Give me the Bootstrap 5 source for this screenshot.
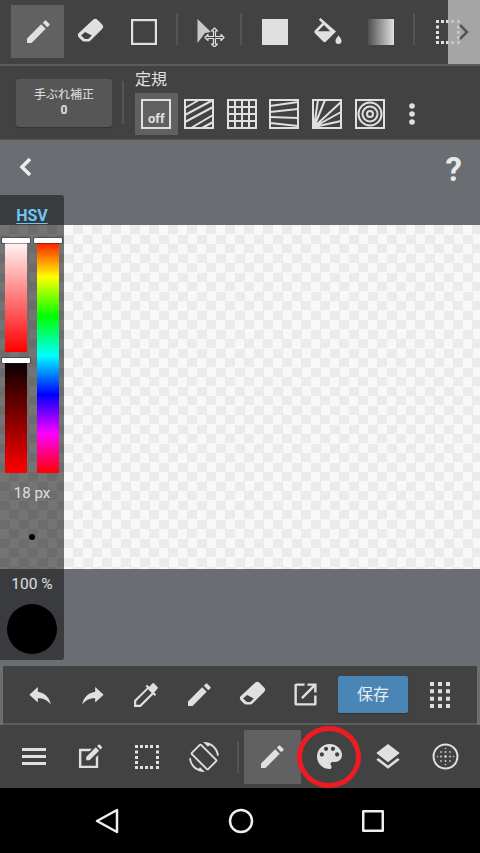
<!DOCTYPE html>
<html lang="ja">
<head>
    <meta charset="UTF-8">
    <meta name="viewport" content="width=device-width, initial-scale=1.0">
    <title>ペイント</title>
    <link href="https://cdn.jsdelivr.net/npm/bootstrap@5.3.0/dist/css/bootstrap.min.css" rel="stylesheet">
    <style>
        html, body { width: 480px; height: 853px; overflow: hidden; background: #000; }
        body { font-family: Roboto, "Noto Sans CJK JP", sans-serif; color: #e0e0e0; }
        svg { display: block; }
        .ico { fill: #e0e0e0; stroke: none; }
        .app-shell { width: 480px; height: 853px; }

        .bar-top { height: 66px; background: #424242; border-bottom: 2px solid #5c5c5c; padding: 5px 0 0 11px; }
        .tool-slot { width: 53px; height: 53px; flex: none; }
        .tool-slot.is-on, .main-slot.is-on { background: #616161; }
        .tool-sep { width: 2px; height: 32px; background: #555; flex: none; margin: 0 6px; }
        .tool-sep-tight { margin-left: 3px; }
        .scroll-hint { top: 0; right: 0; width: 32px; height: 64px; background: rgba(190,190,190,.8); }

        .bar-rules { height: 74px; background: #424242; border-bottom: 1px solid #555; padding-left: 16px; }
        .shake-btn { width: 96px; height: 48px; margin-top: 13px; background: #565656; border-radius: 3px; font-size: 12px; line-height: 15px; box-shadow: 0 1px 1px #333; }
        .shake-btn b { font-family: Roboto, sans-serif; }
        .rules-sep { width: 2px; height: 43px; background: #555; margin: 15px 11px 0 10px; }
        .rules-title { font-size: 16px; line-height: 20px; padding-top: 4px; height: 27px; }
        .rule-slot { width: 42.7px; height: 42px; flex: none; }
        .rule-slot.is-on { background: #616161; }
        .off-box { width: 30px; height: 30px; border: 2px solid #e0e0e0; font-size: 13px; font-weight: 700; line-height: 14px; padding-bottom: 1px; }

        .stage { height: 526px; background: #6a6d72; }
        .stage-head { height: 85px; padding: 17px 18px 0 18px; }
        .help-mark { font-size: 33px; color: #e8e8e8; margin-top: -4px; }
        .sheet { height: 344px; margin-left: 64px; background: #f8f8f8; background-image: conic-gradient(#ebebeb 25%, transparent 0 50%, #ebebeb 0 75%, transparent 0); background-size: 19px 19px; }

        .side-panel { left: 0; top: 55px; width: 64px; height: 465px; }
        .side-head { height: 30px; background: #3a3b3e; border-top-right-radius: 3px; color: #6ec6f5; font-size: 16px; font-weight: 700; line-height: 18px; padding-top: 12px; text-decoration: underline; text-underline-offset: 2px; }
        .side-body { height: 344px; background: #747474; background-image: conic-gradient(#6c6c6c 25%, transparent 0 50%, #6c6c6c 0 75%, transparent 0); background-size: 19px 19px; padding: 13px 5px 0; }
        .side-foot { height: 91px; background: #3a3b3e; border-bottom-right-radius: 3px; font-size: 15.500px; line-height: 16px; padding-top: 7px; }
        .slider-col { width: 22px; gap: 6px; }
        .slider { width: 22px; }
        .slider i { position: absolute; left: -3px; top: 0; width: 28px; height: 5px; background: #fff; border-radius: 1px; box-shadow: 0 0 0 1px rgba(40,40,40,.45); }
        .sl-sat { height: 114px; background: linear-gradient(#fff, #f00); }
        .sl-val { height: 115px; background: linear-gradient(#000, #f00); }
        .sl-hue { height: 235px; background: linear-gradient(#f00, #ff0 16.6%, #0f0 33.3%, #0ff 50%, #00f 66.6%, #f0f 83.3%, #f00); }
        .px-label { font-size: 15px; line-height: 16px; margin-top: 12px; }
        .brush-dot { width: 6px; height: 6px; background: #000; border-radius: 50%; margin-top: 33px; }
        .ink-dot { width: 50px; height: 50px; background: #000; border-radius: 50%; margin-top: 12px; }

        .bar-edit { height: 59px; background: #6a6d72; padding: 0 3px; }
        .bar-edit-in { height: 59px; background: #424242; border-bottom: 2px solid #5c5c5c; padding: 0 9px 0 10px; }
        .edit-slot { width: 53.2px; flex: none; }
        .save-btn { width: 70px; height: 37px; margin-left: 6px; margin-right: 5px; background: #4a86b5; border: 0; border-radius: 2px; color: #e8eef3; font-size: 16px; padding: 0; box-shadow: 0 1px 1px #333; }

        .bar-main { height: 63px; background: #424242; padding-left: 5.650px; }
        .main-slot { width: 56.700px; height: 54px; flex: none; }
        .main-slot.is-on { width: 57px; }
        .main-slot.main-wide { width: 58px; }
        .main-sep { width: 2px; height: 32px; background: #555; flex: none; margin: 0 4.500px 0 5px; }
        .red-ring { left: 297px; top: 726px; width: 64px; height: 62px; border: 5px solid #ed1c24; border-radius: 50%; }

        .bar-nav { height: 65px; background: #000; padding-left: 95px; gap: 108.500px; }
    </style>
</head>
<body>
    <svg width="0" height="0" class="position-absolute">
        <defs>
            <symbol id="i-pen" viewBox="0 0 24 24"><path d="M1 18.500 15.200 4.300l4.500 4.500L5.500 23H1z"/><path d="M16.800 2.700l2-2a1 1 0 0 1 1.400 0l3.100 3.100a1 1 0 0 1 0 1.400l-2 2z"/></symbol>
            <symbol id="i-eraser" viewBox="0 0 26 26"><path d="M15.500 1.800a3 3 0 0 1 4.200 0l4.500 4.500a3 3 0 0 1 0 4.200L13 21.700a3 3 0 0 1-2 .9H6.800a3 3 0 0 1-2-.9l-3-3a3 3 0 0 1 0-4.200zM7.800 13.400l-3.900 3.400 3.700 3.500h3.300l3.400-3.400z" fill-rule="evenodd"/></symbol>
            <symbol id="i-move" viewBox="0 0 30 30"><path d="M1.500 2 15 15l-6 1-7.500 10z" fill="#c8c8c8"/><path d="M18.500 11l3 3h-2v5.500h5.500v-2l3 3-3 3v-2h-5.500v5.500h2l-3 3-3-3h2v-5.500h-5.500v2l-3-3 3-3v2h5.500v-5.500h-2z" fill="#424242" stroke="#e0e0e0" stroke-width="1.200" stroke-linejoin="round"/></symbol>
            <symbol id="i-bucket" viewBox="0 0 30 30"><path d="M7.500 1 5.800 2.700l3.400 3.400-7.300 7.300a2 2 0 0 0 0 2.800l8.300 8.300a2 2 0 0 0 2.800 0l10-10zM11 8l6.200 6.200H4.800z" fill-rule="evenodd"/><path d="M25.500 18.500s-3 3.300-3 5.400a3 3 0 0 0 6 0c0-2.100-3-5.400-3-5.400z"/></symbol>
            <symbol id="i-dash" viewBox="0 0 26 26"><path d="M1 1h3v3H1zM6 1h3v3H6zM11 1h3v3h-3zM16 1h3v3h-3zM22 1h3v3h-3zM1 6.500h3v3H1zM22 6.500h3v3h-3zM1 12h3v3H1zM22 12h3v3h-3zM1 17h3v3H1zM22 17h3v3h-3zM1 22h3v3H1zM6 22h3v3H6zM11 22h3v3h-3zM16 22h3v3h-3zM22 22h3v3h-3z"/></symbol>
            <symbol id="i-back" viewBox="0 0 24 24"><path d="M10 9V4.500L2.200 11.800 10 19v-4.100c5 0 8.800 1.600 12 6-1-5.500-4.500-10.800-12-11.900z"/></symbol>
            <symbol id="i-dropper" viewBox="0 0 24 24"><path d="M22.700 4.600 19.400 1.300c-.4-.4-1-.4-1.400 0l-3.100 3.100-1.900-1.900-1.400 1.400 1.400 1.400L1 16.800V23h6.200l11.500-11.500 1.400 1.400 1.400-1.400-1.900-1.900L22.700 6c.4-.4.400-1 0-1.400zM6.300 21H3v-3.300L13.900 6.800l3.300 3.300z"/></symbol>
            <symbol id="i-export" viewBox="0 0 26 26"><path d="M3.500 1.500H12v2.500H4v18h18v-8h2.500v8.500a2 2 0 0 1-2 2h-19a2 2 0 0 1-2-2v-19a2 2 0 0 1 2-2z"/><path d="M15 1.500h9.500V11H22V5.800L10.200 17.600l-1.800-1.800L20.200 4H15z"/></symbol>
            <symbol id="i-grid" viewBox="0 0 20 26"><path d="M0 0h4v4H0zM8 0h4v4H8zM16 0h4v4h-4zM0 7.300h4v4H0zM8 7.300h4v4H8zM16 7.300h4v4h-4zM0 14.700h4v4H0zM8 14.700h4v4H8zM16 14.700h4v4h-4zM0 22h4v4H0zM8 22h4v4H8zM16 22h4v4h-4z"/></symbol>
            <symbol id="i-note" viewBox="0 0 26 26"><path d="M1 5h13.500l-2.500 2.500H3.500v15h15v-8.500l2.500-2.500V25H1z"/><path d="M8.500 13.500 18.500 3.500l3.500 3.500-10 10H8.500z"/><path d="M19.800 2.200l1.500-1.500a1 1 0 0 1 1.400 0l2.100 2.100a1 1 0 0 1 0 1.400l-1.500 1.500z"/></symbol>
            <symbol id="i-rotate" viewBox="0 0 24 24"><path d="M16.480 2.520c3.270 1.550 5.610 4.720 5.970 8.480h1.500C23.440 4.840 18.290 0 12 0l-.66.030 3.810 3.810 1.330-1.320zm-6.250-.77c-.59-.59-1.540-.59-2.120 0L1.750 8.110c-.59.59-.59 1.540 0 2.120l12.020 12.020c.59.59 1.540.59 2.120 0l6.360-6.360c.59-.59.59-1.540 0-2.120L10.230 1.750zm4.600 19.440L2.810 9.170l6.360-6.360 12.020 12.020-6.360 6.360zm-7.310.29C4.250 19.940 1.910 16.760 1.550 13H.05C.56 19.160 5.710 24 12 24l.66-.03-3.810-3.810-1.330 1.320z"/></symbol>
            <symbol id="i-palette" viewBox="3 3 18 18"><path d="M12 3c-4.970 0-9 4.030-9 9s4.030 9 9 9c.83 0 1.500-.67 1.500-1.500 0-.39-.15-.74-.39-1.010-.23-.26-.38-.61-.38-.99 0-.83.67-1.500 1.500-1.500H16c2.760 0 5-2.240 5-5 0-4.420-4.030-8-9-8zm-5.500 9c-.83 0-1.500-.67-1.500-1.500S5.670 9 6.500 9 8 9.670 8 10.500 7.330 12 6.500 12zm3-4C8.670 8 8 7.330 8 6.500S8.670 5 9.500 5s1.500.67 1.500 1.500S10.330 8 9.500 8zm5 0c-.83 0-1.500-.67-1.500-1.500S13.670 5 14.500 5s1.500.67 1.500 1.500S15.330 8 14.500 8zm3 4c-.83 0-1.500-.67-1.500-1.500S16.670 9 17.500 9s1.500.67 1.500 1.500-.67 1.500-1.500 1.500z"/></symbol>
            <symbol id="i-layers" viewBox="3 2 18 20"><path d="M11.990 18.540l-7.370-5.730L3 14.070l9 7 9-7-1.630-1.270-7.380 5.740zM12 16l7.360-5.730L21 9l-9-7-9 7 1.630 1.270L12 16z"/></symbol>
        </defs>
    </svg>

    <div class="app-shell d-flex flex-column position-relative">
        <div class="bar-top d-flex position-relative">
            <div class="tool-slot is-on d-flex align-items-center justify-content-center"><svg class="ico" width="24" height="24"><use href="#i-pen"/></svg></div>
            <div class="tool-slot d-flex align-items-center justify-content-center"><svg class="ico" width="27" height="27"><use href="#i-eraser"/></svg></div>
            <div class="tool-slot d-flex align-items-center justify-content-center"><svg width="26" height="26" fill="none" stroke="#e0e0e0" stroke-width="2.200"><rect x="1.100" y="1.100" width="23.800" height="23.800"/></svg></div>
            <div class="tool-sep mt-2 align-self-start"></div>
            <div class="tool-slot d-flex align-items-center justify-content-center"><svg class="ico" width="30" height="30"><use href="#i-move"/></svg></div>
            <div class="tool-sep tool-sep-tight mt-2 align-self-start"></div>
            <div class="tool-slot d-flex align-items-center justify-content-center"><svg width="26" height="26"><rect width="26" height="26" fill="#e0e0e0"/></svg></div>
            <div class="tool-slot d-flex align-items-center justify-content-center"><svg class="ico" width="30" height="30"><use href="#i-bucket"/></svg></div>
            <div class="tool-slot d-flex align-items-center justify-content-center">
                <svg width="26" height="26"><defs><linearGradient id="fade"><stop offset="0" stop-color="#505050"/><stop offset="1" stop-color="#e0e0e0"/></linearGradient></defs><rect width="26" height="26" fill="url(#fade)"/></svg>
            </div>
            <div class="tool-sep mt-2 align-self-start"></div>
            <div class="tool-slot d-flex align-items-center justify-content-center"><svg class="ico" width="26" height="26"><use href="#i-dash"/></svg></div>
            <div class="scroll-hint position-absolute d-flex align-items-center justify-content-center">
                <svg width="12" height="18" fill="none" stroke="#555" stroke-width="2.500"><path d="M2 2l7 7-7 7"/></svg>
            </div>
        </div>

        <div class="bar-rules d-flex">
            <div class="shake-btn d-flex flex-column align-items-center justify-content-center">
                <span>手ぶれ補正</span><b>0</b>
            </div>
            <div class="rules-sep"></div>
            <div>
                <div class="rules-title">定規</div>
                <div class="d-flex">
                    <div class="rule-slot is-on d-flex align-items-center justify-content-center"><div class="off-box d-flex align-items-end justify-content-center">off</div></div>
                    <div class="rule-slot d-flex align-items-center justify-content-center">
                        <svg width="30" height="30" fill="none" stroke="#e0e0e0" stroke-width="2"><rect x="1" y="1" width="28" height="28"/><path d="M1 9 15 1M1 16 29 1M1 23 29 8M7 29 29 16M18 29 29 23"/></svg>
                    </div>
                    <div class="rule-slot d-flex align-items-center justify-content-center">
                        <svg width="30" height="30" fill="none" stroke="#e0e0e0" stroke-width="2"><rect x="1" y="1" width="28" height="28"/><path d="M8 1v28M15 1v28M22 1v28M1 8h28M1 15h28M1 22h28"/></svg>
                    </div>
                    <div class="rule-slot d-flex align-items-center justify-content-center">
                        <svg width="30" height="30" fill="none" stroke="#e0e0e0" stroke-width="2"><rect x="1" y="1" width="28" height="28"/><path d="M1 7 29 3M1 13 29 10M1 18 29 19M1 24 29 27"/></svg>
                    </div>
                    <div class="rule-slot d-flex align-items-center justify-content-center">
                        <svg width="30" height="30" fill="none" stroke="#e0e0e0" stroke-width="2"><rect x="1" y="1" width="28" height="28"/><path d="M2 28 6 1M2 28 13 1M2 28 29 3M2 28 29 13M2 28 29 22"/></svg>
                    </div>
                    <div class="rule-slot d-flex align-items-center justify-content-center">
                        <svg width="30" height="30" fill="none" stroke="#e0e0e0" stroke-width="2"><rect x="1" y="1" width="28" height="28"/><circle cx="15" cy="15" r="11.500"/><circle cx="15" cy="15" r="7.500"/><circle cx="15" cy="15" r="3"/></svg>
                    </div>
                    <div class="rule-slot d-flex align-items-center justify-content-center">
                        <svg width="6" height="22" fill="#e0e0e0"><circle cx="3" cy="3" r="2.800"/><circle cx="3" cy="11" r="2.800"/><circle cx="3" cy="19" r="2.800"/></svg>
                    </div>
                </div>
            </div>
        </div>

        <div class="stage position-relative">
            <div class="stage-head d-flex justify-content-between align-items-start">
                <svg width="15" height="20" fill="none" stroke="#eee" stroke-width="3.500"><path d="M12 2 4 10l8 8"/></svg>
                <span class="help-mark fw-bold lh-1">?</span>
            </div>
            <div class="sheet"></div>

            <div class="side-panel position-absolute text-center">
                <div class="side-head">HSV</div>
                <div class="side-body d-flex flex-column align-items-center">
                    <div class="d-flex w-100 justify-content-between">
                        <div class="slider-col d-flex flex-column">
                            <div class="slider sl-sat position-relative"><i></i></div>
                            <div class="slider sl-val position-relative"><i></i></div>
                        </div>
                        <div class="slider sl-hue position-relative"><i></i></div>
                    </div>
                    <div class="px-label">18 px</div>
                    <div class="brush-dot"></div>
                </div>
                <div class="side-foot d-flex flex-column align-items-center">
                    <div>100 %</div>
                    <div class="ink-dot"></div>
                </div>
            </div>
        </div>

        <div class="bar-edit">
            <div class="bar-edit-in d-flex align-items-center">
                <div class="edit-slot d-flex justify-content-center"><svg class="ico" width="26" height="26"><use href="#i-back"/></svg></div>
                <div class="edit-slot d-flex justify-content-center"><svg class="ico flip-x" width="26" height="26" transform="scale(-1 1)"><use href="#i-back"/></svg></div>
                <div class="edit-slot d-flex justify-content-center"><svg class="ico" width="26" height="26"><use href="#i-dropper"/></svg></div>
                <div class="edit-slot d-flex justify-content-center"><svg class="ico" width="24" height="24"><use href="#i-pen"/></svg></div>
                <div class="edit-slot d-flex justify-content-center"><svg class="ico" width="27" height="27"><use href="#i-eraser"/></svg></div>
                <div class="edit-slot d-flex justify-content-center"><svg class="ico" width="25" height="25"><use href="#i-export"/></svg></div>
                <button type="button" class="btn save-btn">保存</button>
                <div class="edit-slot d-flex justify-content-center"><svg class="ico" width="20" height="26"><use href="#i-grid"/></svg></div>
            </div>
        </div>

        <div class="bar-main d-flex align-items-center">
            <div class="main-slot d-flex align-items-center justify-content-center"><svg width="26" height="18" fill="#e0e0e0"><path d="M1 0h24v3H1zM1 7h24v3H1zM1 14h24v3H1z"/></svg></div>
            <div class="main-slot d-flex align-items-center justify-content-center"><svg class="ico" width="25" height="25"><use href="#i-note"/></svg></div>
            <div class="main-slot d-flex align-items-center justify-content-center"><svg class="ico" width="26" height="26"><use href="#i-dash"/></svg></div>
            <div class="main-slot d-flex align-items-center justify-content-center"><svg class="ico" width="30" height="30"><use href="#i-rotate"/></svg></div>
            <div class="main-sep"></div>
            <div class="main-slot is-on d-flex align-items-center justify-content-center"><svg class="ico" width="24" height="24"><use href="#i-pen"/></svg></div>
            <div class="main-slot main-wide d-flex align-items-center justify-content-center"><svg class="ico" width="25" height="25"><use href="#i-palette"/></svg></div>
            <div class="main-slot main-wide d-flex align-items-center justify-content-center"><svg class="ico" width="24" height="26"><use href="#i-layers"/></svg></div>
            <div class="main-slot main-wide d-flex align-items-center justify-content-center">
                <svg width="27" height="27" fill="#e0e0e0"><circle cx="13.500" cy="13.500" r="12" fill="none" stroke="#e0e0e0" stroke-width="2"/><g opacity=".8"><circle cx="13.500" cy="13.500" r="1.400"/><circle cx="9" cy="13.500" r="1.100"/><circle cx="18" cy="13.500" r="1.100"/><circle cx="13.500" cy="9" r="1.100"/><circle cx="13.500" cy="18" r="1.100"/><circle cx="9" cy="9" r=".9"/><circle cx="18" cy="9" r=".9"/><circle cx="9" cy="18" r=".9"/><circle cx="18" cy="18" r=".9"/><circle cx="5.500" cy="13.500" r=".8"/><circle cx="21.500" cy="13.500" r=".8"/><circle cx="13.500" cy="5.500" r=".8"/><circle cx="13.500" cy="21.500" r=".8"/></g></svg>
            </div>
        </div>

        <div class="bar-nav d-flex align-items-center">
            <svg width="24" height="26" fill="none" stroke="#eee" stroke-width="2.500" stroke-linejoin="round"><path d="M22 2v22L2 13z"/></svg>
            <svg width="26" height="26" fill="none" stroke="#eee" stroke-width="2.500"><circle cx="13" cy="13" r="11"/></svg>
            <svg width="22" height="22" fill="none" stroke="#eee" stroke-width="2.500" stroke-linejoin="round"><rect x="1.250" y="1.250" width="19.500" height="19.500"/></svg>
        </div>

        <div class="red-ring position-absolute"></div>
    </div>

    <script src="https://cdn.jsdelivr.net/npm/bootstrap@5.3.0/dist/js/bootstrap.bundle.min.js"></script>
</body>
</html>
